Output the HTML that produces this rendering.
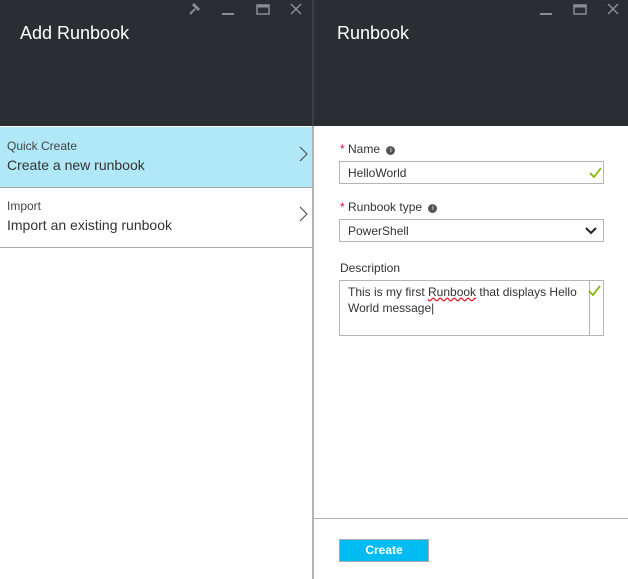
<!DOCTYPE html>
<html><head><style>
body{margin:0;width:628px;height:579px;background:#fff;font-family:"Segoe UI","Liberation Sans",sans-serif;position:relative;overflow:hidden}
.a{position:absolute}
.hdr{background:#2a2d32;top:0;height:126px}
.t{color:#fff;font-size:18px}
.lbl{font-size:12px;color:#333}
.box{border:1px solid #b5b5b5;background:#fff;font-size:12px;color:#333;box-sizing:border-box}
</style></head><body>
<div class="a hdr" style="left:0;width:312px"></div>
<div class="a" style="left:312px;top:0;width:2px;height:579px;background:#b3b3b3"></div>
<div class="a" style="left:312px;top:0;width:2px;height:126px;background:#3a3d42"></div>
<div class="a hdr" style="left:314px;width:314px"></div>
<div class="a t" style="left:20px;top:23px">Add Runbook</div>
<div class="a t" style="left:337px;top:23px">Runbook</div>
<svg class="a" style="left:0;top:0" width="628" height="20">
<g stroke="#8a8d91" stroke-width="2" fill="none">
<path d="M190 14 L195 9" /><path d="M193 4 L199 10" stroke-width="3"/>
<path d="M222 14 H234"/>
<rect x="257" y="5" width="12" height="9" stroke-width="1.5"/><path d="M257 6 H269" stroke-width="3"/>
<path d="M291 4 L301 14 M301 4 L291 14" stroke-width="1.5"/>
<path d="M540 14 H552"/>
<rect x="574" y="5" width="12" height="9" stroke-width="1.5"/><path d="M574 6 H586" stroke-width="3"/>
<path d="M608 4 L618 14 M618 4 L608 14" stroke-width="1.5"/>
</g></svg>
<div class="a" style="left:0;top:127px;width:312px;height:60px;background:#b1e8f7"></div>
<div class="a" style="left:0;top:187px;width:312px;height:1px;background:#a9a9a9"></div>
<div class="a" style="left:0;top:247px;width:312px;height:1px;background:#a9a9a9"></div>
<div class="a" style="left:7px;top:139px;font-size:12px;color:#444">Quick Create</div>
<div class="a" style="left:7px;top:157px;font-size:14px;color:#333">Create a new runbook</div>
<div class="a" style="left:7px;top:199px;font-size:12px;color:#444">Import</div>
<div class="a" style="left:7px;top:217px;font-size:14px;color:#333">Import an existing runbook</div>
<svg class="a" style="left:298px;top:145px" width="12" height="100"><path d="M2 2 L9 9 L2 16 M2 62 L9 69 L2 76" stroke="#444" fill="none" stroke-width="1"/></svg>
<div class="a lbl" style="left:340px;top:142px"><span style="color:#e81123">*</span> Name <span style="display:inline-block;width:9px;height:9px;border-radius:50%;background:#555;color:#fff;font-size:7px;text-align:center;line-height:9px;vertical-align:1px;margin-left:3px">i</span></div>
<div class="a box" style="left:339px;top:161px;width:265px;height:23px;padding:4px 8px">HelloWorld</div>
<div class="a lbl" style="left:340px;top:200px"><span style="color:#e81123">*</span> Runbook type <span style="display:inline-block;width:9px;height:9px;border-radius:50%;background:#555;color:#fff;font-size:7px;text-align:center;line-height:9px;vertical-align:1px;margin-left:3px">i</span></div>
<div class="a box" style="left:339px;top:219px;width:265px;height:23px;padding:4px 8px">PowerShell</div>
<div class="a lbl" style="left:340px;top:261px">Description</div>
<div class="a box" style="left:339px;top:280px;width:265px;height:56px;padding:3px 8px;line-height:16px">This is my first <span style="text-decoration:underline wavy #e81123">Runbook</span> that displays Hello<br>World message|</div>
<div class="a" style="left:589px;top:281px;width:1px;height:54px;background:#b5b5b5"></div>
<svg class="a" style="left:0;top:0" width="628" height="300"><g fill="none" stroke-width="1.8">
<path d="M590 173 L594 177 L601 168" stroke="#7fba00"/>
<path d="M589 291 L593 295 L600 286" stroke="#7fba00"/>
<path d="M586 228 L591 233 L596 228" stroke="#222" stroke-width="2"/>
</g></svg>
<div class="a" style="left:314px;top:518px;width:314px;height:1px;background:#b3b3b3"></div>
<div class="a" style="left:339px;top:539px;width:90px;height:23px;box-sizing:border-box;background:#00bcf2;border:1px solid #aaa;color:#fff;font-size:12px;font-weight:bold;text-align:center;line-height:21px">Create</div>
</body></html>
